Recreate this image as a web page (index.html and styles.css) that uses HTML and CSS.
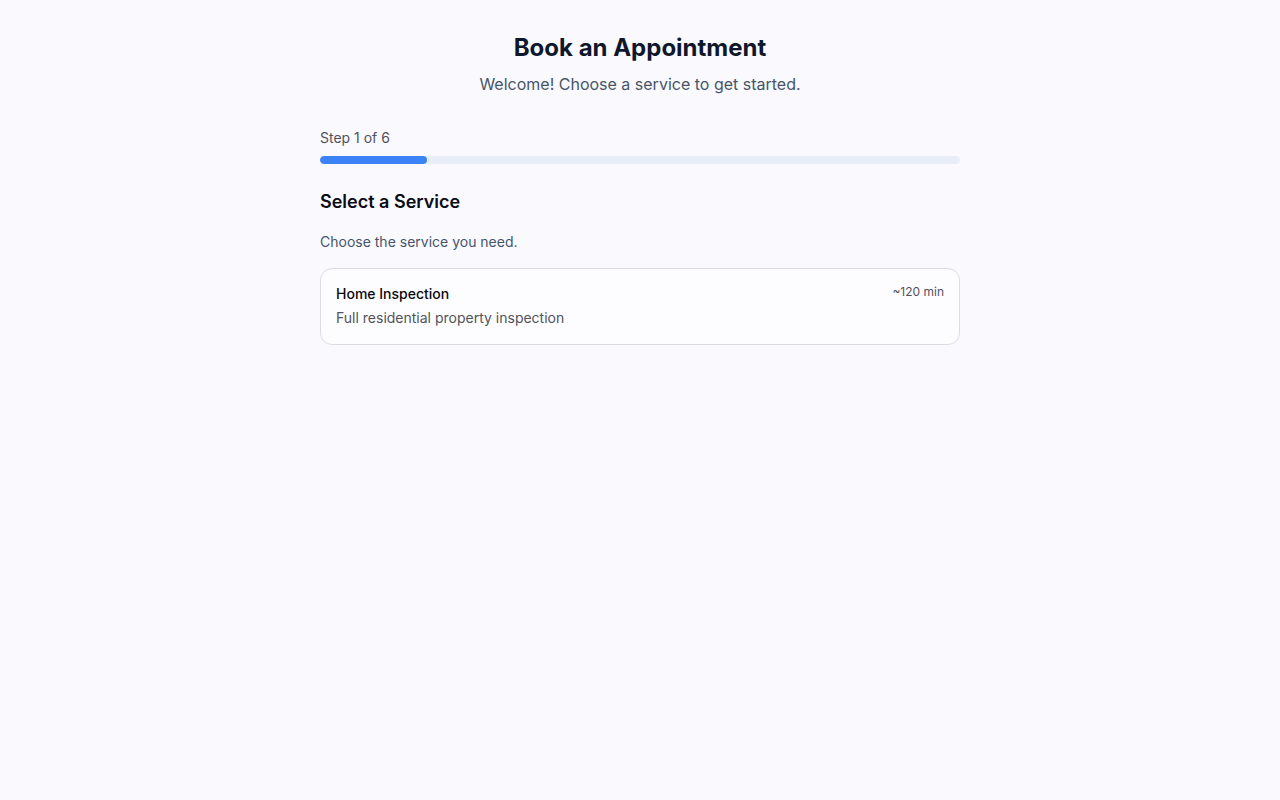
FILE: index.html
```html
<!doctype html>
<html lang="en">
<head>
    <meta charset="utf-8">
    <title>Book an Appointment</title>
    <link rel="stylesheet" href="styles.css">
</head>
<body>
    <div class="page">
        <header class="head">
            <h1>Book an Appointment</h1>
            <p class="welcome">Welcome! Choose a service to get started.</p>
        </header>

        <div class="progress">
            <p class="step">Step 1 of 6</p>
            <div class="track"><div class="fill" style="width: 16.67%"></div></div>
        </div>

        <section class="services">
            <h2>Select a Service</h2>
            <p class="hint">Choose the service you need.</p>
            <div class="card">
                <div class="card-top">
                    <p class="name">Home Inspection</p>
                    <span class="dur">~120 min</span>
                </div>
                <p class="desc">Full residential property inspection</p>
            </div>
        </section>
    </div>
</body>
</html>
```

FILE: styles.css
```css
body {
    font-family: Inter, "Noto Sans", sans-serif;
    margin: 0;
    background: #f9f9fe;
    color: #0b0b14;
}
p {
    margin: 0;
}
.page {
    width: 640px;
    margin: 0 auto;
    padding-top: 32px;
}
.head {
    text-align: center;
}
.head h1 {
    margin: 0;
    font-size: 24px;
    line-height: 32px;
    font-weight: 700;
    color: #0f172a;
}
.welcome {
    margin-top: 8px;
    font-size: 16px;
    line-height: 24px;
    color: #475569;
}
.progress {
    margin-top: 32px;
}
.step {
    font-size: 14px;
    line-height: 20px;
    color: #52525b;
}
.track {
    margin-top: 8px;
    height: 8px;
    border-radius: 4px;
    background: #e9edf5;
    overflow: hidden;
}
.fill {
    height: 100%;
    background: #3b82f6;
    border-radius: 4px;
}
.services {
    margin-top: 24px;
}
.services h2 {
    margin: 0;
    font-size: 18px;
    line-height: 28px;
    font-weight: 600;
}
.hint {
    margin-top: 16px;
    font-size: 14px;
    line-height: 20px;
    color: #475569;
}
.card {
    margin-top: 16px;
    padding: 15px 15px 16px;
    border: 1px solid #dcdce4;
    border-radius: 12px;
    background: #fdfdff;
}
.card-top {
    display: flex;
    justify-content: space-between;
    align-items: flex-start;
}
.name {
    font-size: 14px;
    line-height: 20px;
    font-weight: 500;
    color: #09090b;
}
.dur {
    font-size: 12px;
    line-height: 16px;
    color: #52525b;
}
.desc {
    margin-top: 4px;
    font-size: 14px;
    line-height: 20px;
    color: #52525b;
}
```
